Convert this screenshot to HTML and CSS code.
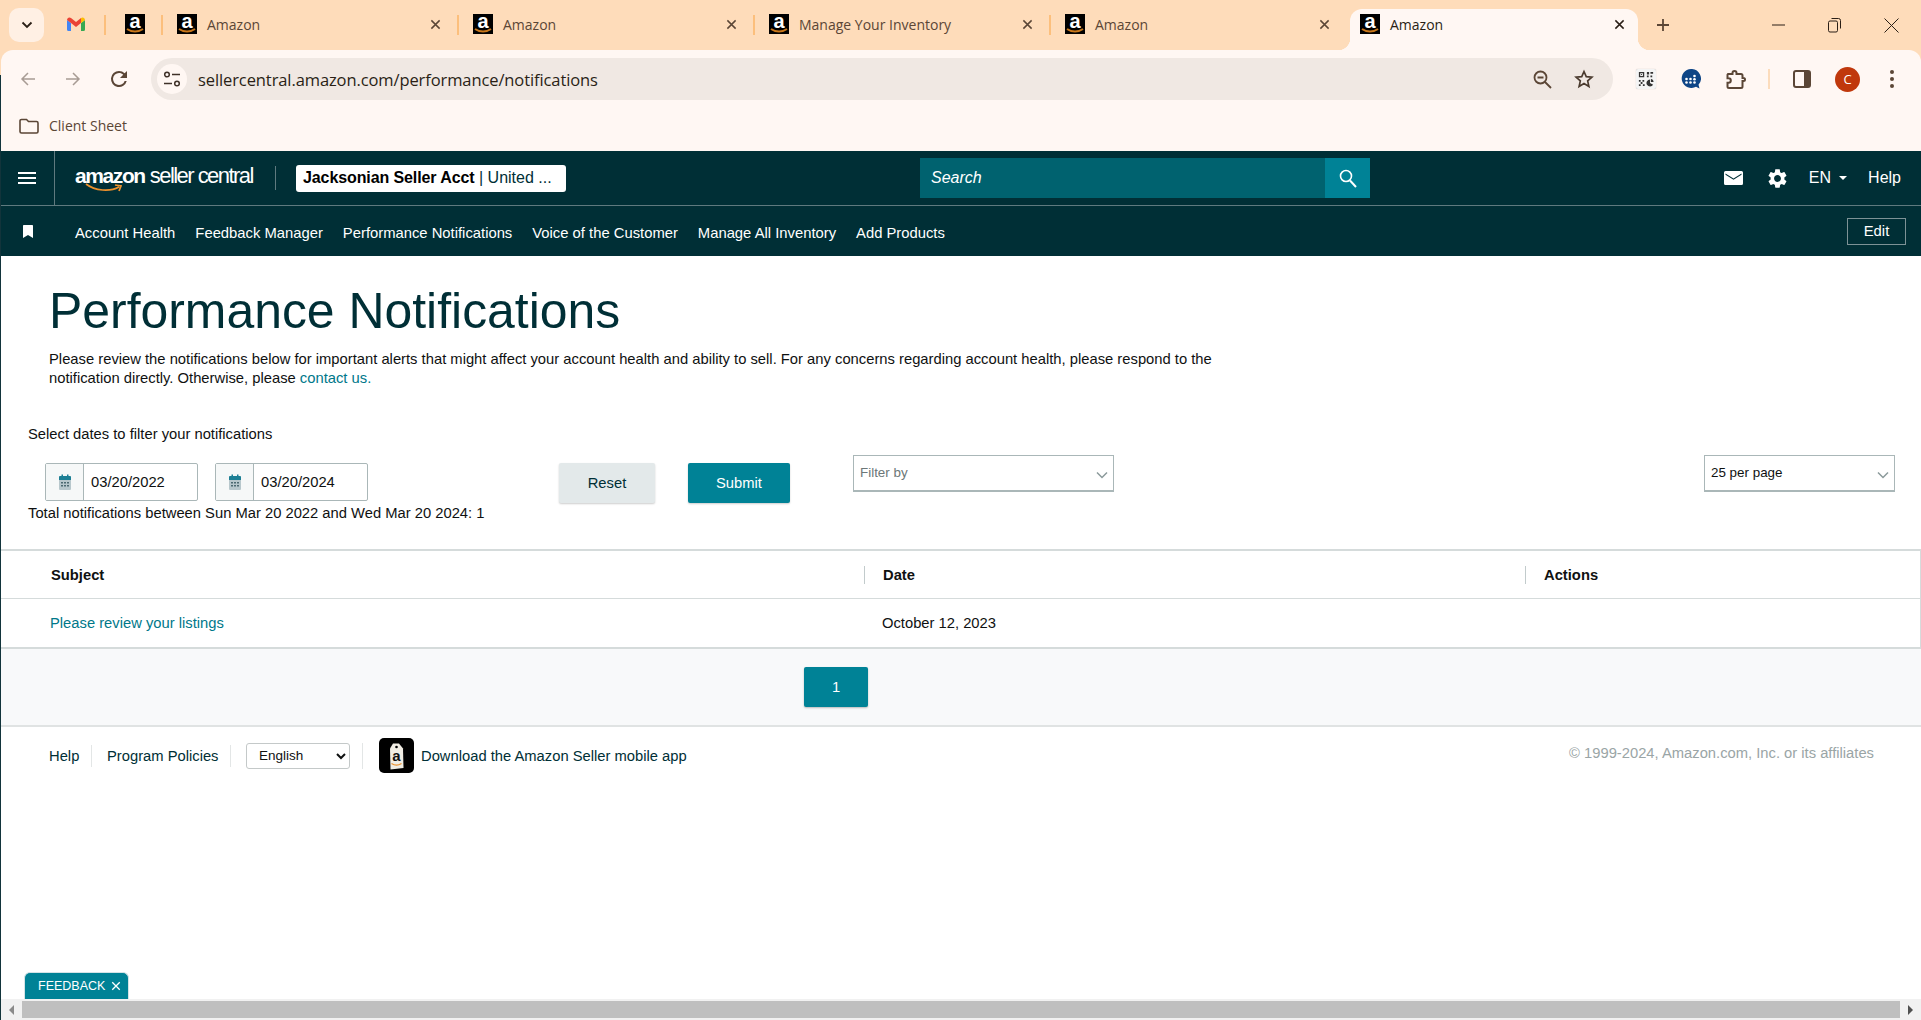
FILE: index.html
```html
<!DOCTYPE html>
<html lang="en">
<head>
  <meta charset="UTF-8">
  <title>Performance Notifications</title>
  <link rel="stylesheet" href="styles.css">
</head>
<body>
  <svg class="sprite" xmlns="http://www.w3.org/2000/svg">
    <symbol id="fav" viewBox="0 0 20 20">
      <rect width="20" height="20" fill="#000"/>
      <text x="10" y="13.5" text-anchor="middle" font-family="Liberation Sans" font-weight="700" font-size="20" fill="#fff">a</text>
      <path d="M2 15c4.800 3.400 11.200 3.400 16 0" fill="none" stroke="#c9771a" stroke-width="2"/>
    </symbol>
    <symbol id="chev" viewBox="0 0 12 8">
      <path d="M1 1.500l5 5 5-5" fill="none" stroke="#8b9a9b" stroke-width="1.500"/>
    </symbol>
    <symbol id="cal" viewBox="0 0 14 16">
      <path d="M1 3.500a1 1 0 0 1 1-1h10a1 1 0 0 1 1 1V15a1 1 0 0 1-1 1H2a1 1 0 0 1-1-1z" fill="#b7c7cc"/>
      <path d="M1 3a1 1 0 0 1 1-1h10a1 1 0 0 1 1 1v3H1z" fill="#1d7f95"/>
      <path d="M3.500 .5h1.500V3H3.500zM9 .5h1.500V3H9z" fill="#1d7f95"/>
      <path d="M3 8h2v1.500H3zM6 8h2v1.500H6zM9 8h2v1.500H9zM3 11h2v1.500H3zM6 11h2v1.500H6zM9 11h2v1.500H9z" fill="#4d6a72"/>
    </symbol>
    <symbol id="x" viewBox="0 0 12 12">
      <path d="M1.500 1.500l9 9m0-9l-9 9" fill="none" stroke="currentColor" stroke-width="1.600"/>
    </symbol>
  </svg>

  <div class="tabstrip">
    <div class="tab-menu">
      <svg width="12" height="8" viewBox="0 0 12 8"><path d="M1.500 1.500L6 6l4.500-4.500" fill="none" stroke="#2a1f16" stroke-width="1.800"/></svg>
    </div>
    <div class="tab pinned pinned-mail">
      <svg width="18" height="14" viewBox="0 0 18 14">
        <path d="M0 3v9.500A1.500 1.500 0 0 0 1.500 14H4V6z" fill="#4285f4"/>
        <path d="M14 6v8h2.500a1.500 1.500 0 0 0 1.500-1.500V3z" fill="#34a853"/>
        <path d="M0 3a2.500 2.500 0 0 1 4-2l5 4 5-4L14 6 9 10 4 6 0 3z" fill="#ea4335"/>
        <path d="M14 1a2.500 2.500 0 0 1 4 2l-4 3z" fill="#fbbc04"/>
      </svg>
    </div>
    <div class="tab pinned">
      <svg class="fav"><use href="#fav"/></svg>
    </div>
    <div class="tab">
      <svg class="fav"><use href="#fav"/></svg>
      <span class="tab-title">Amazon</span>
      <svg class="tab-x"><use href="#x"/></svg>
    </div>
    <div class="tab">
      <svg class="fav"><use href="#fav"/></svg>
      <span class="tab-title">Amazon</span>
      <svg class="tab-x"><use href="#x"/></svg>
    </div>
    <div class="tab">
      <svg class="fav"><use href="#fav"/></svg>
      <span class="tab-title">Manage Your Inventory</span>
      <svg class="tab-x"><use href="#x"/></svg>
    </div>
    <div class="tab no-sep">
      <svg class="fav"><use href="#fav"/></svg>
      <span class="tab-title">Amazon</span>
      <svg class="tab-x"><use href="#x"/></svg>
    </div>
    <div class="tab active">
      <svg class="fav"><use href="#fav"/></svg>
      <span class="tab-title">Amazon</span>
      <svg class="tab-x"><use href="#x"/></svg>
    </div>
    <svg class="new-tab" width="14" height="14" viewBox="0 0 14 14"><path d="M7 1v12M1 7h12" stroke="#5b4636" stroke-width="1.800"/></svg>
    <div class="win-controls">
      <svg width="14" height="14" viewBox="0 0 14 14"><path d="M0 7h13" stroke="#2a1f16"/></svg>
      <svg width="14" height="16" viewBox="0 0 14 16"><path d="M.5 5.500a1.500 1.500 0 0 1 1.500-1.500h6a1.500 1.500 0 0 1 1.500 1.500v8a1.500 1.500 0 0 1-1.500 1.500H2a1.500 1.500 0 0 1-1.500-1.500zM3.500 1.500h7a2 2 0 0 1 2 2v8" fill="none" stroke="#2a1f16"/></svg>
      <svg width="15" height="15" viewBox="0 0 15 15"><path d="M.5.5l14 14m0-14l-14 14" stroke="#2a1f16"/></svg>
    </div>
  </div>

  <div class="chrome">
    <div class="toolbar">
      <svg class="tool back" width="16" height="16" viewBox="0 0 16 16"><path d="M15 8H2M8 2L2 8l6 6" fill="none" stroke="#a89c94" stroke-width="1.500"/></svg>
      <svg class="tool forward" width="16" height="16" viewBox="0 0 16 16"><path d="M1 8h13M8 2l6 6-6 6" fill="none" stroke="#a89c94" stroke-width="1.500"/></svg>
      <svg class="tool reload" width="24" height="24" viewBox="0 0 24 24"><path d="M17.650 6.350A7.960 7.960 0 0 0 12 4a8 8 0 1 0 7.730 10h-2.080A6 6 0 1 1 12 6c1.660 0 3.140.69 4.220 1.780L13 11h7V4z" fill="#5b4636"/></svg>
      <div class="omnibox">
        <span class="site-info">
          <svg width="18" height="16" viewBox="0 0 18 16"><g fill="none" stroke="#3f3128" stroke-width="1.500"><circle cx="4" cy="3.500" r="2.300"/><circle cx="14" cy="12.500" r="2.300"/><path d="M9 3.500h8M1 12.500h8"/></g></svg>
        </span>
        <span class="url">sellercentral.amazon.com/performance/notifications</span>
        <svg class="omni-zoom" width="19" height="19" viewBox="0 0 19 19"><g fill="none" stroke="#5b4636" stroke-width="1.800"><circle cx="7.500" cy="7.500" r="6"/><path d="M12 12l6 6M4.500 7.500h6"/></g></svg>
        <svg class="omni-star" width="20" height="20" viewBox="0 0 24 24"><path d="M12 3l2.700 6.200 6.800.6-5.100 4.500 1.500 6.700L12 17.500 6.100 21l1.500-6.700L2.500 9.800l6.800-.6z" fill="none" stroke="#4a3a2e" stroke-width="2"/></svg>
      </div>
      <span class="ext-qr">
        <svg width="16" height="16" viewBox="0 0 18 18"><g fill="#333"><path d="M1 1h6v6H1zM2.500 2.500v3h3v-3zM3.500 3.500h1v1h-1zM10 1h2.500v3H10zM14 1h3v2h-3zM10 5h2v2h-2zM14 5h2v2h-2zM1 10h2v2H1zM5 10h2v2H5zM3 12.500h2v2H3zM1 15h2v2H1zM5.500 15h2v2h-2z"/><path d="M13.500 9.500a4 4 0 1 0 3.500 6l-3.500-2z"/><path d="M14.500 9a3.500 3.500 0 0 1 3 3.500h-3z"/></g></svg>
      </span>
      <svg class="ext-chat" width="20" height="20" viewBox="0 0 20 20"><path d="M10 0a9.500 9.500 0 1 0 5 17.700l3.500 1.800-1-3.700A9.500 9.500 0 0 0 10 0z" fill="#0e4586"/><g fill="#fff"><circle cx="5.500" cy="10" r="1.300"/><circle cx="5.500" cy="13.500" r="1.300"/><circle cx="9.500" cy="10" r="1.300"/><circle cx="9.500" cy="13.500" r="1.300"/><circle cx="13.500" cy="7" r="1.300"/><circle cx="13.500" cy="10.300" r="1.300"/><circle cx="13.500" cy="13.500" r="1.300"/></g></svg>
      <svg class="ext-puzzle" width="21" height="19" viewBox="0 0 21 19"><path d="M2 4h4.500V3a2 2 0 0 1 2-2 2 2 0 0 1 2 2v1H15a1.500 1.500 0 0 1 1.500 1.500V8h1a1.500 1.500 0 0 1 0 3h-1v5.500A1.500 1.500 0 0 1 15 18H3a1.500 1.500 0 0 1-1.500-1.500v-3.700h1a2.300 2.300 0 0 0 0-4.600h-1V5.500A1.500 1.500 0 0 1 2 4z" fill="none" stroke="#5b4636" stroke-width="2"/></svg>
      <span class="tool-sep"></span>
      <svg class="side-panel" width="18" height="18" viewBox="0 0 18 18"><rect x="1" y="1" width="16" height="16" rx="2" fill="none" stroke="#5b4636" stroke-width="2"/><rect x="11" y="1" width="6" height="16" fill="#5b4636"/></svg>
      <span class="avatar">C</span>
      <svg class="kebab" width="6" height="20" viewBox="0 0 6 20"><g fill="#5b4636"><circle cx="3" cy="3" r="2"/><circle cx="3" cy="10" r="2"/><circle cx="3" cy="17" r="2"/></g></svg>
    </div>
    <div class="bookmarks">
      <svg width="20" height="16" viewBox="0 0 20 16"><path d="M1 3a1.500 1.500 0 0 1 1.500-1.500h5l2 2h8A1.500 1.500 0 0 1 19 5v8.500a1.500 1.500 0 0 1-1.500 1.500h-15A1.500 1.500 0 0 1 1 13.500z" fill="none" stroke="#5b4636" stroke-width="1.600"/></svg>
      <span>Client Sheet</span>
    </div>
  </div>

  <div class="page">
    <div class="nav-top">
      <div class="hamburger">
        <svg width="18" height="12" viewBox="0 0 18 12"><path d="M0 1h18M0 6h18M0 11h18" stroke="#fff" stroke-width="1.800"/></svg>
      </div>
      <div class="logo">
        <span class="logo-amazon">amazon</span><span class="logo-seller">seller central</span>
        <svg class="logo-smile" width="38" height="9" viewBox="0 0 38 9"><path d="M1 1c9 7 24 8 33 3M30 2l6 1-2 5" fill="none" stroke="#ec912d" stroke-width="1.700"/></svg>
      </div>
      <span class="logo-sep"></span>
      <div class="account"><b>Jacksonian Seller Acct</b> | United ...</div>
      <div class="search">
        <span class="search-field">Search</span>
        <span class="search-btn">
          <svg width="18" height="19" viewBox="0 0 18 19"><g fill="none" stroke="#fff" stroke-width="1.600"><circle cx="7" cy="7" r="5.500"/><path d="M11 11.500l6 6.500" stroke-width="2"/></g></svg>
        </span>
      </div>
      <div class="nav-right">
        <svg class="nav-mail" width="19" height="14" viewBox="0 0 19 14"><path d="M1.500 0h16A1.500 1.500 0 0 1 19 1.500v11a1.500 1.500 0 0 1-1.500 1.500h-16A1.500 1.500 0 0 1 0 12.500v-11A1.500 1.500 0 0 1 1.500 0zm0 2.500v1.200l8 5 8-5V2.500l-8 5z" fill="#fff"/></svg>
        <svg class="nav-gear" width="23" height="23" viewBox="0 0 24 24"><path fill="#fff" d="M19.140 12.940c.04-.3.060-.61.060-.94 0-.32-.02-.64-.07-.94l2.030-1.580c.18-.14.23-.41.12-.61l-1.920-3.320c-.12-.22-.37-.29-.59-.22l-2.390.96c-.5-.38-1.030-.7-1.620-.94l-.36-2.540c-.04-.24-.24-.41-.48-.41h-3.840c-.24 0-.43.17-.47.41l-.36 2.540c-.59.24-1.130.57-1.620.94l-2.390-.96c-.22-.08-.47 0-.59.22L2.740 8.870c-.12.21-.08.47.12.61l2.030 1.580c-.05.3-.09.63-.09.94s.02.64.07.94l-2.030 1.580c-.18.14-.23.41-.12.61l1.920 3.320c.12.22.37.29.59.22l2.390-.96c.5.38 1.030.7 1.620.94l.36 2.540c.05.24.24.41.48.41h3.840c.24 0 .44-.17.47-.41l.36-2.540c.59-.24 1.130-.56 1.620-.94l2.390.96c.22.08.47 0 .59-.22l1.920-3.320c.12-.22.07-.47-.12-.61l-2.010-1.580zM12 15.600c-1.980 0-3.600-1.620-3.600-3.600s1.620-3.600 3.600-3.600 3.600 1.620 3.600 3.600-1.620 3.600-3.600 3.600z"/></svg>
        <span class="nav-lang">EN</span>
        <span class="caret"></span>
        <span class="nav-help">Help</span>
      </div>
    </div>
    <div class="nav-bottom">
      <svg class="nav-bookmark" width="12" height="13" viewBox="0 0 12 13"><path d="M1.500 0h9A1 1 0 0 1 11 1v12L6 10l-5 3V1a1 1 0 0 1 .5-1z" fill="#fff"/></svg>
      <a>Account Health</a>
      <a>Feedback Manager</a>
      <a>Performance Notifications</a>
      <a>Voice of the Customer</a>
      <a>Manage All Inventory</a>
      <a>Add Products</a>
      <span class="edit-btn">Edit</span>
    </div>

    <div class="content">
      <h1>Performance Notifications</h1>
      <p class="intro">Please review the notifications below for important alerts that might affect your account health and ability to sell. For any concerns regarding account health, please respond to the notification directly. Otherwise, please <a class="link">contact us.</a></p>

      <div class="filter-label">Select dates to filter your notifications</div>
      <div class="filter-row">
        <div class="filter-left">
          <div class="dates">
            <div class="date-box">
              <span class="date-icon"><svg width="14" height="16"><use href="#cal"/></svg></span>
              <span class="date-val">03/20/2022</span>
            </div>
            <div class="date-box">
              <span class="date-icon"><svg width="14" height="16"><use href="#cal"/></svg></span>
              <span class="date-val">03/20/2024</span>
            </div>
          </div>
          <div class="total">Total notifications between Sun Mar 20 2022 and Wed Mar 20 2024: 1</div>
        </div>
        <span class="btn btn-reset">Reset</span>
        <span class="btn btn-submit">Submit</span>
        <div class="drop drop-filter"><span>Filter by</span><svg width="12" height="8"><use href="#chev"/></svg></div>
        <div class="drop drop-page"><span>25 per page</span><svg width="12" height="8"><use href="#chev"/></svg></div>
      </div>

      <table class="notif-table">
        <colgroup>
          <col class="col-subject">
          <col class="col-date">
          <col>
        </colgroup>
        <thead>
          <tr>
            <th><span class="head-first">Subject</span></th>
            <th><span class="head-cell">Date</span></th>
            <th><span class="head-cell">Actions</span></th>
          </tr>
        </thead>
        <tbody>
          <tr>
            <td class="cell-subject"><a class="link">Please review your listings</a></td>
            <td class="cell-date">October 12, 2023</td>
            <td></td>
          </tr>
        </tbody>
      </table>

      <div class="pager"><span class="page-num">1</span></div>

      <div class="footer">
        <a class="foot-link foot-help">Help</a>
        <a class="foot-link foot-policies">Program Policies</a>
        <select class="lang-select">
          <option>English</option>
        </select>
        <span class="foot-sep"></span>
        <span class="app-icon">
          <svg width="35" height="35" viewBox="0 0 35 35">
            <rect width="35" height="35" rx="5" fill="#000"/>
            <path d="M14 5.500h6l4 5 .5 19.500-13 1.500-.5-21z" fill="#f1ede4"/>
            <circle cx="17.500" cy="9" r="1.300" fill="#000"/>
            <text x="17.500" y="22.500" text-anchor="middle" font-family="Liberation Sans" font-weight="700" font-size="15" fill="#111">a</text>
            <path d="M12.500 25.500c3 2 7 2 10 0" fill="none" stroke="#ec912d" stroke-width="1.300"/>
          </svg>
        </span>
        <span class="app-text">Download the Amazon Seller mobile app</span>
        <span class="copyright">© 1999-2024, Amazon.com, Inc. or its affiliates</span>
      </div>
    </div>

    <div class="feedback">FEEDBACK <svg width="10" height="10"><use href="#x"/></svg></div>

    <div class="hscroll">
      <span class="scroll-arrow"><span class="arrow-left"></span></span>
      <span class="scroll-thumb"></span>
      <span class="scroll-arrow"><span class="arrow-right"></span></span>
    </div>
  </div>
</body>
</html>
```

FILE: styles.css
```css
* {
  box-sizing: border-box;
}

html, body {
  margin: 0;
  height: 100%;
  overflow: hidden;
}

body {
  width: 1921px;
  height: 1020px;
  display: flex;
  flex-direction: column;
  font-family: "Liberation Sans", Arial, sans-serif;
  font-size: 14.750px;
  color: #0f1111;
  background: linear-gradient(#fedcba 75px, #12343b 75px);
}

.sprite {
  display: none;
}

/* browser tabs */
.tabstrip {
  height: 50px;
  flex: none;
  display: flex;
  align-items: flex-end;
  background: #fedcba;
  font-family: "Open Sans", sans-serif;
  font-size: 14px;
  color: #5b4636;
}

.tab-menu {
  width: 35px;
  height: 34px;
  margin: 0 5px 8px 9px;
  border-radius: 10px;
  background: #fff0e4;
  display: flex;
  align-items: center;
  justify-content: center;
}

.tab {
  width: 296px;
  height: 41px;
  padding: 0 18px 0 14px;
  display: flex;
  align-items: center;
  position: relative;
  flex: none;
}

.tab::after {
  content: "";
  position: absolute;
  right: 0;
  top: 6px;
  width: 2px;
  height: 20px;
  background: #fcbf7c;
}

.tab.no-sep {
  width: 297px;
}

.tab.no-sep::after {
  display: none;
}

.tab.pinned {
  width: 57px;
  padding: 0;
  justify-content: center;
}

.tab.pinned-mail {
  padding-right: 3px;
}

.tab.pinned svg {
  margin: -11px 0 0;
}

.fav {
  width: 20px;
  height: 20px;
  flex: none;
  margin-top: -11px;
}

.tab-title {
  margin: -11px 0 0 10px;
  flex: 1;
  white-space: nowrap;
}

.tab-x {
  width: 11px;
  height: 11px;
  margin: -11px 0 0 0;
  color: #5b4636;
  flex: none;
}

.tab.active {
  width: 288px;
  margin-left: 2px;
  padding: 0 13px 0 10px;
  background: #fff7f3;
  border-radius: 12px 12px 0 0;
  color: #2a1f16;
}

.tab.active .tab-x {
  color: #2a1f16;
}

.tab.active::before,
.tab.active::after {
  content: "";
  position: absolute;
  top: auto;
  bottom: 0;
  width: 12px;
  height: 12px;
}

.tab.active::before {
  right: -12px;
  background: radial-gradient(circle at 100% 0, #fedcba 12px, #fff7f3 12.500px);
}

.tab.active::after {
  right: auto;
  left: -12px;
  background: radial-gradient(circle at 0 0, #fedcba 12px, #fff7f3 12.500px);
}

.new-tab {
  margin: 0 0 18px 18px;
  flex: none;
}

.win-controls {
  margin-left: auto;
  width: 149px;
  height: 50px;
  padding: 0 22px 0 0;
  display: flex;
  justify-content: space-between;
  align-items: center;
  align-self: stretch;
}

/* browser toolbar */
.chrome {
  flex: none;
  height: 101px;
  margin-left: 1px;
  background: #fff7f3;
  border-radius: 12px 12px 0 0;
  position: relative;
}

.toolbar {
  height: 50px;
  padding-top: 8px;
  display: flex;
  align-items: center;
}

.tool {
  flex: none;
}

.back {
  margin-left: 19px;
}

.forward {
  margin-left: 29px;
}

.reload {
  margin-left: 26px;
}

.omnibox {
  margin-left: 20px;
  width: 1462px;
  height: 42px;
  border-radius: 21px;
  background: #f0e8e3;
  display: flex;
  align-items: center;
  padding-left: 6px;
  flex: none;
}

.site-info {
  width: 30px;
  height: 30px;
  border-radius: 50%;
  background: #fff7f3;
  display: flex;
  align-items: center;
  justify-content: center;
}

.url {
  margin-left: 11px;
  padding-top: 1px;
  font-family: "Open Sans", sans-serif;
  font-size: 16.500px;
  letter-spacing: -.1px;
  color: #2a1f16;
  flex: 1;
}

.omni-zoom {
  margin-right: 22px;
}

.omni-star {
  margin-right: 19px;
}

.ext-qr {
  margin-left: 23px;
  width: 20px;
  height: 20px;
  background: #f4f4f4;
  border-radius: 2px;
  box-shadow: 0 0 1px rgba(0, 0, 0, .3);
  display: flex;
  align-items: center;
  justify-content: center;
  flex: none;
}

.ext-chat {
  margin-left: 25px;
  flex: none;
}

.ext-puzzle {
  margin-left: 25px;
  flex: none;
}

.tool-sep {
  width: 2px;
  height: 20px;
  margin-left: 21px;
  background: #fcdcbc;
  flex: none;
}

.side-panel {
  margin-left: 23px;
  flex: none;
}

.avatar {
  width: 25px;
  height: 25px;
  margin-left: 24px;
  border-radius: 50%;
  background: #c0380c;
  color: #fff;
  font-family: "Open Sans", sans-serif;
  font-size: 13px;
  display: flex;
  align-items: center;
  justify-content: center;
  flex: none;
}

.kebab {
  margin-left: 29px;
  flex: none;
}

.bookmarks {
  height: 51px;
  padding: 0 0 0 18px;
  display: flex;
  align-items: center;
  gap: 10px;
  font-family: "Open Sans", sans-serif;
  font-size: 14px;
  color: #5b4636;
}

/* seller central page */
.page {
  flex: 1;
  display: flex;
  flex-direction: column;
  background: #fff;
  border-left: 1px solid #12343b;
  position: relative;
  min-height: 0;
}

.nav-top {
  height: 54px;
  flex: none;
  display: flex;
  align-items: center;
  background: #002f36;
  color: #fff;
}

.hamburger {
  width: 54px;
  height: 54px;
  border-right: 1px solid #5f7a7f;
  padding-left: 17px;
  display: flex;
  align-items: center;
  flex: none;
}

.logo {
  margin-left: 20px;
  width: 180px;
  height: 30px;
  position: relative;
  display: flex;
  align-items: baseline;
  white-space: nowrap;
  flex: none;
}

.logo-amazon {
  font-size: 21px;
  font-weight: 700;
  letter-spacing: -1.400px;
}

.logo-seller {
  margin-left: 5px;
  font-size: 22px;
  letter-spacing: -1.550px;
}

.logo-smile {
  position: absolute;
  left: 10px;
  top: 20px;
}

.logo-sep {
  width: 1px;
  height: 24px;
  margin-left: 20px;
  background: #5f7a7f;
  flex: none;
}

.account {
  width: 270px;
  height: 27px;
  margin-left: 20px;
  padding-left: 7px;
  background: #fff;
  border-radius: 3px;
  color: #002f36;
  font-size: 16px;
  line-height: 26px;
  white-space: nowrap;
  flex: none;
}

.account b {
  color: #000;
  letter-spacing: -.1px;
}

.search {
  width: 450px;
  height: 40px;
  margin-left: 354px;
  display: flex;
  flex: none;
}

.search-field {
  flex: 1;
  padding-left: 11px;
  background: #00626f;
  font-size: 16px;
  font-style: italic;
  line-height: 40px;
}

.search-btn {
  width: 45px;
  background: #008296;
  display: flex;
  align-items: center;
  justify-content: center;
}

.nav-right {
  margin-left: auto;
  padding-right: 20px;
  display: flex;
  align-items: center;
  font-size: 16px;
}

.nav-gear {
  margin-left: 23px;
}

.nav-lang {
  margin-left: 20px;
}

.caret {
  width: 0;
  height: 0;
  margin-left: 8px;
  border-left: 4px solid transparent;
  border-right: 4px solid transparent;
  border-top: 4px solid #fff;
}

.nav-help {
  margin-left: 21px;
}

.nav-bottom {
  height: 51px;
  flex: none;
  display: flex;
  align-items: center;
  border-top: 1px solid #5f7a7f;
  background: #002f36;
  color: #fff;
  padding-left: 21px;
  font-size: 14.800px;
}

.nav-bookmark {
  margin-right: 41px;
}

.nav-bottom a {
  margin-right: 20px;
  padding-top: 4px;
  white-space: nowrap;
}

.edit-btn {
  width: 59px;
  height: 27px;
  margin-left: auto;
  margin-right: 15px;
  border: 1px solid #7d9296;
  text-align: center;
  line-height: 25px;
}

.content {
  flex: 1;
  display: flex;
  flex-direction: column;
  min-height: 0;
}

h1 {
  margin: 27px 0 0 48px;
  font-size: 49.900px;
  font-weight: 400;
  line-height: 56px;
  color: #002f36;
}

.intro {
  width: 1180px;
  margin: 11px 0 0 48px;
  line-height: 19px;
  font-size: 14.780px;
}

.link {
  color: #00788a;
}

.filter-label {
  margin: 36px 0 0 27px;
  line-height: 20px;
}

.filter-row {
  height: 94px;
  margin-top: 11px;
  display: flex;
  align-items: flex-start;
  padding-right: 26px;
}

.filter-left {
  width: 558px;
  padding: 8px 0 0 27px;
  flex: none;
}

.dates {
  display: flex;
  gap: 17px;
  margin-left: 17px;
}

.date-box {
  width: 153px;
  height: 38px;
  border: 1px solid #aab7b8;
  border-radius: 2px;
  display: flex;
  align-items: center;
}

.date-icon {
  width: 38px;
  height: 36px;
  background: #f6f8f8;
  border-right: 1px solid #aab7b8;
  display: flex;
  align-items: center;
  justify-content: center;
  flex: none;
}

.date-val {
  margin-left: 7px;
}

.total {
  margin-top: 2px;
  line-height: 20px;
  white-space: nowrap;
}

.btn {
  height: 40px;
  margin-top: 8px;
  border-radius: 2px;
  text-align: center;
  line-height: 40px;
  box-shadow: 0 1px 2px rgba(0, 0, 0, .2);
  flex: none;
}

.btn-reset {
  width: 96px;
  background: #e3e9ea;
  color: #002f36;
}

.btn-submit {
  width: 102px;
  margin-left: 33px;
  background: #008296;
  color: #fff;
}

.drop {
  height: 37px;
  border: 1px solid #aab7b8;
  border-bottom-width: 2px;
  padding: 0 5px 0 6px;
  display: flex;
  justify-content: space-between;
  font-size: 13.400px;
  line-height: 33px;
  flex: none;
}

.drop svg {
  margin-top: 15px;
}

.drop-filter {
  width: 261px;
  margin-left: 63px;
  color: #6c7778;
}

.drop-page {
  width: 191px;
  margin-left: auto;
}

.notif-table {
  width: 100%;
  flex: none;
  border-collapse: collapse;
  table-layout: fixed;
  border-top: 2px solid #d5dbdb;
  border-right: 1px solid #d5dbdb;
}

.col-subject {
  width: 863px;
}

.col-date {
  width: 661px;
}

.notif-table th {
  height: 48px;
  padding: 2px 0 0;
  border-bottom: 1px solid #d5dbdb;
  text-align: left;
  font-weight: 700;
}

.head-first {
  padding-left: 50px;
}

.head-cell {
  display: block;
  height: 18px;
  padding-left: 18px;
  border-left: 1px solid #c2cbcc;
  line-height: 18px;
}

.notif-table td {
  height: 50px;
  padding: 1px 0 0;
  border-bottom: 2px solid #d5dbdb;
}

.notif-table .cell-subject {
  padding-left: 49px;
}

.notif-table .cell-date {
  padding-left: 18px;
}

.pager {
  height: 78px;
  flex: none;
  display: flex;
  justify-content: center;
  align-items: center;
  padding-right: 250px;
  background: #f8f9fa;
  border-bottom: 2px solid #e0e3e3;
}

.page-num {
  width: 64px;
  height: 40px;
  border-radius: 2px;
  background: #008296;
  color: #fff;
  text-align: center;
  line-height: 40px;
  box-shadow: 0 1px 2px rgba(0, 0, 0, .25);
}

.footer {
  padding: 7px 47px 0 48px;
  display: flex;
  align-items: center;
  height: 50px;
  flex: none;
}

.foot-link {
  height: 22px;
  line-height: 22px;
  border-right: 1px solid #e3e6e6;
  color: #002f36;
}

.foot-help {
  width: 43px;
}

.foot-policies {
  width: 139px;
  padding-left: 15px;
}

.lang-select {
  width: 104px;
  height: 26px;
  margin-left: 15px;
  padding-left: 8px;
  border: 1px solid #c4c9c9;
  border-radius: 3px;
  background: #fff;
  font-family: "Liberation Sans", Arial, sans-serif;
  font-size: 13.500px;
  color: #0f1111;
}

.foot-sep {
  width: 1px;
  height: 26px;
  margin-left: 12px;
  background: #e3e6e6;
}

.app-icon {
  margin-left: 16px;
  height: 35px;
  flex: none;
}

.app-text {
  margin-left: 7px;
  color: #002f36;
}

.copyright {
  margin-left: auto;
  margin-top: -6px;
  color: #9aa5a6;
}

.feedback {
  position: absolute;
  left: 23px;
  bottom: 21px;
  width: 105px;
  height: 27px;
  padding: 6px 0 0 13px;
  border-radius: 6px 6px 0 0;
  background: #008296;
  border: 1px solid #d5e3e6;
  border-bottom: 0;
  color: #fff;
  font-size: 12.500px;
  white-space: nowrap;
}

.feedback svg {
  margin-left: 2px;
  vertical-align: -1px;
}

.hscroll {
  margin-top: auto;
  height: 21px;
  flex: none;
  display: flex;
  align-items: center;
  background: #f1f1f1;
}

.scroll-arrow {
  width: 21px;
  display: flex;
  justify-content: center;
  flex: none;
}

.scroll-thumb {
  flex: 1;
  height: 17px;
  background: #bfbfbf;
}

.arrow-left, .arrow-right {
  width: 0;
  height: 0;
  border-top: 5px solid transparent;
  border-bottom: 5px solid transparent;
}

.arrow-left {
  border-right: 5px solid #8a8a8a;
}

.arrow-right {
  border-left: 5px solid #505050;
}
```
